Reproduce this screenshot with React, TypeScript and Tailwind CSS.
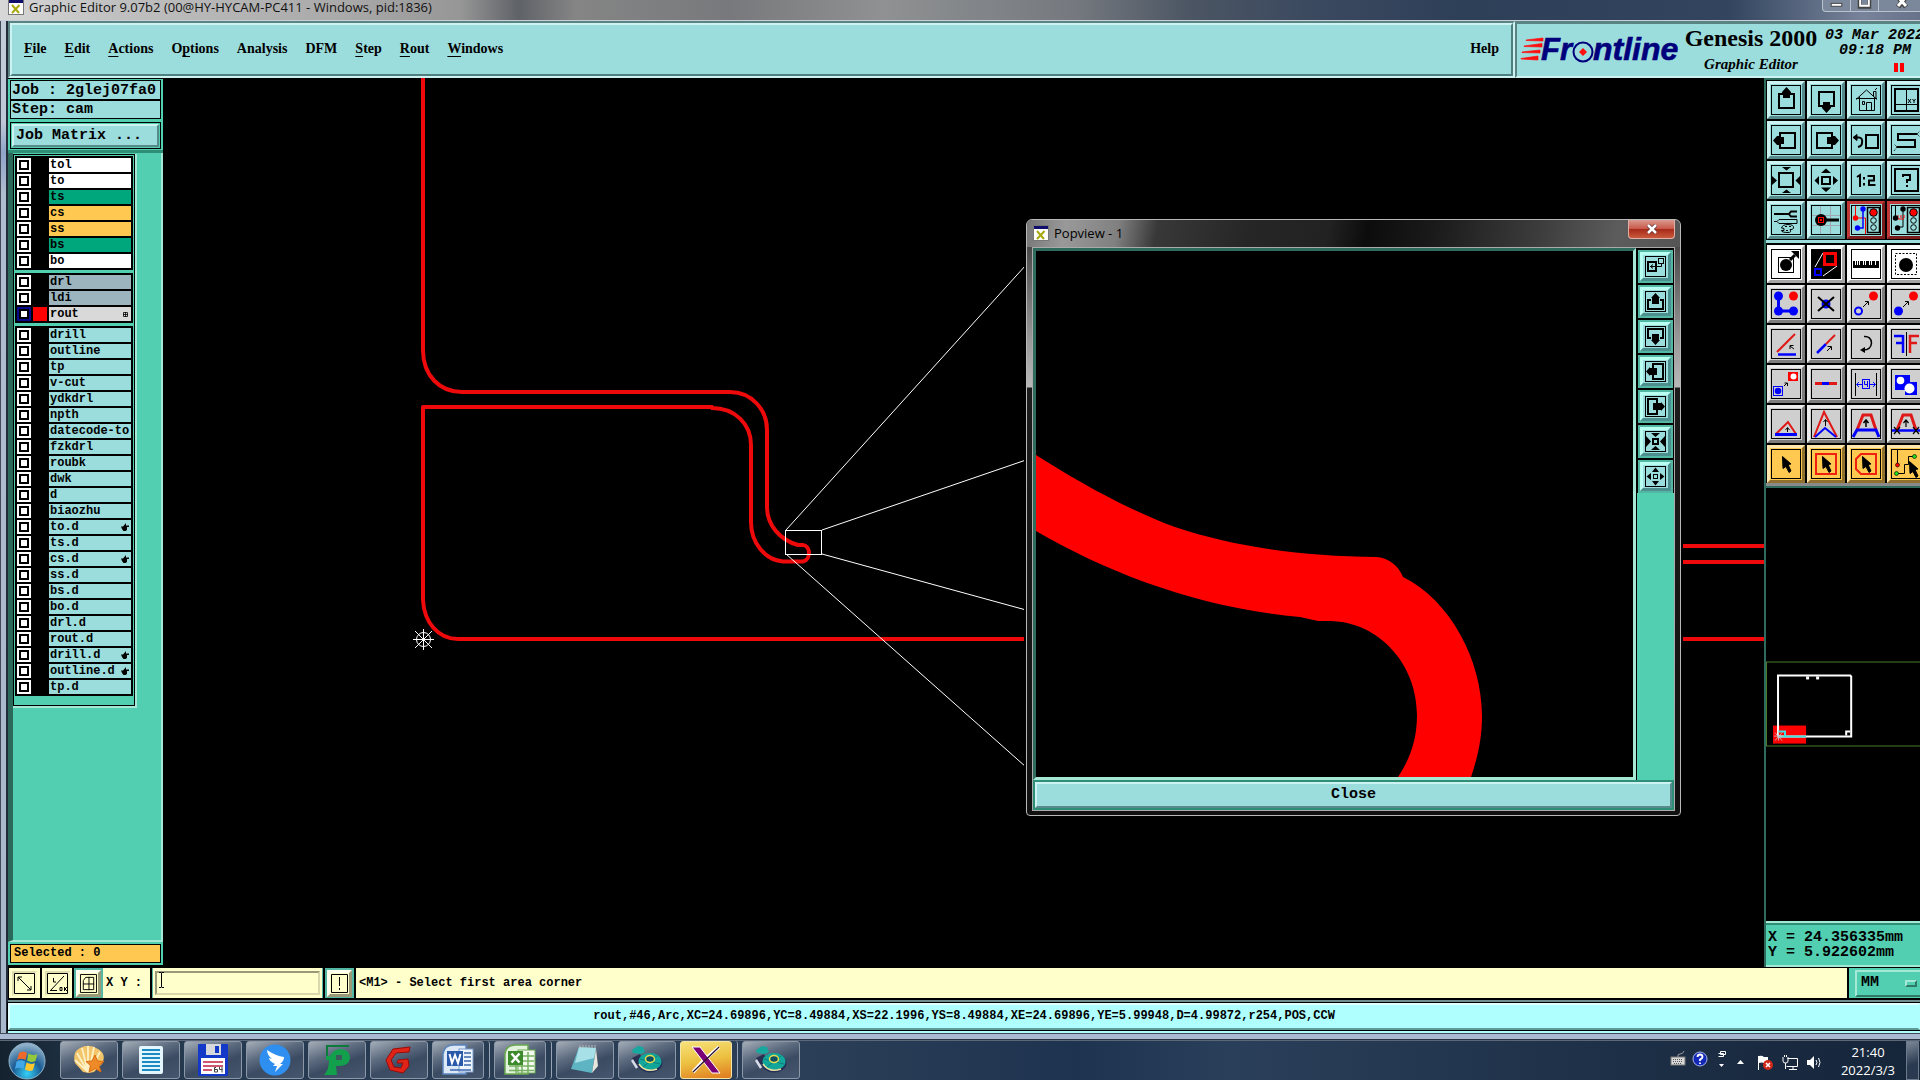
import React from 'react';

type Tone = 'teal' | 'white' | 'gray' | 'red' | 'amber';

const toneClass: Record<Tone, string> = {
  teal: 'bg-[#9bdcdc] border-t-[#cdf2f2] border-l-[#cdf2f2] border-b-[#578a8a] border-r-[#578a8a]',
  white: 'bg-white border-t-[#fafafa] border-l-[#fafafa] border-b-[#a4a4a4] border-r-[#a4a4a4]',
  gray: 'bg-[#cfcfcf] border-t-[#ebebeb] border-l-[#ebebeb] border-b-[#7c7c7c] border-r-[#7c7c7c]',
  red: 'bg-[#9bdcdc] border-t-[#c03838] border-l-[#c03838] border-b-[#7a1c1c] border-r-[#7a1c1c]',
  amber: 'bg-[#ffc850] border-t-[#ffe6ac] border-l-[#ffe6ac] border-b-[#8f702e] border-r-[#8f702e]',
};

const R = '#ff0000';
const B = '#0000ff';
const RD = '#e01818';

const Cursor = ({ x = 10, y = 6 }: { x?: number; y?: number }) => (
  <path transform={`translate(${x} ${y})`} d="M0.5 0.500L9 8L6 8.500L9 15L7 16.500L4 10.500L1 12.500Z" fill="#000" stroke="#000" />
);

const Lights = () => (
  <g>
    <rect x="16.500" y="2.500" width="12" height="25" fill="#9bdcdc" stroke="#000" strokeWidth="1.500" />
    <circle cx="22.500" cy="7.500" r="3.800" fill={R} stroke="#000" />
    <circle cx="22.500" cy="15.500" r="2.800" fill="none" stroke="#000" />
    <circle cx="22.500" cy="22.500" r="2.800" fill="none" stroke="#000" />
  </g>
);

type Tool = { name: string; tone: Tone; art: React.ReactNode };

const toolsTop: Tool[] = [
  {
    name: 'Pan up', tone: 'teal',
    art: <g><rect x="8" y="9" width="15" height="14" fill="none" stroke="#000" strokeWidth="2" /><path d="M15.500 2L20 7V9H19V13H12V9H11V7Z" /></g>,
  },
  {
    name: 'Pan down', tone: 'teal',
    art: <g><rect x="8" y="7" width="15" height="14" fill="none" stroke="#000" strokeWidth="2" /><path d="M15.500 28L20 23V21H19V17H12V21H11V23Z" /></g>,
  },
  {
    name: 'Home', tone: 'teal',
    art: (
      <g fill="none" stroke="#000">
        <path d="M5 14.500L15.500 5L26 14.500M8.500 12V25.500H23.500V12M15.500 25V17.500H20.500V25M11.500 16.500h2v3h-2zM22.500 11V6.500H25V13M24 5L26 3" />
        <path d="M5 13.500H26" />
      </g>
    ),
  },
  {
    name: 'Window XY', tone: 'teal',
    art: (
      <g fill="none" stroke="#000">
        <rect x="4" y="4" width="23" height="22" strokeWidth="2" />
        <path d="M15.500 4V26M4 19.500H27" />
        <path d="M17 14L20 18M20 14L17 18M21.500 14L23 16L24.500 14M23 16V18" />
      </g>
    ),
  },
  {
    name: 'Pan left', tone: 'teal',
    art: <g><rect x="9" y="8" width="15" height="15" fill="none" stroke="#000" strokeWidth="2" /><path d="M2 15.500L6 11H8V12H13V19H8V20H6Z" /></g>,
  },
  {
    name: 'Pan right', tone: 'teal',
    art: <g><rect x="6" y="8" width="15" height="15" fill="none" stroke="#000" strokeWidth="2" /><path d="M28 15.500L24 11H22V12H16V19H22V20H24Z" /></g>,
  },
  {
    name: 'Previous view', tone: 'teal',
    art: <g fill="none" stroke="#000" strokeWidth="2"><rect x="15" y="10" width="12" height="13" /><path d="M5 12.500H8Q12 13 11 18Q11 21 7 22" /><path d="M2 12.500L6 9.500V15.500Z" fill="#000" strokeWidth="1" /></g>,
  },
  {
    name: 'Serpentine', tone: 'teal',
    art: <g fill="none" stroke="#000"><path d="M26 9H7V15H24V22H6" strokeWidth="2" /><path d="M26 9L29 6M26 9L29 12M6 22L3 19M6 22L3 26" strokeDasharray="1 1" /></g>,
  },
  {
    name: 'Zoom in', tone: 'teal',
    art: <g><rect x="8" y="8" width="14" height="14" fill="none" stroke="#000" strokeWidth="2" /><path d="M11 2H20L15.500 5.500ZM11 28H20L15.500 24.500ZM1 11V20L6 15.500ZM29 11V20L24.500 15.500Z" /></g>,
  },
  {
    name: 'Zoom out', tone: 'teal',
    art: <g><rect x="11" y="12" width="8" height="7" fill="none" stroke="#000" strokeWidth="2" /><path d="M10 8H20L15 3.500ZM10 22.500H20L15 27ZM8 11V20L3.500 15.500ZM22 11V20L27 15.500Z" /></g>,
  },
  {
    name: 'Zoom ratio', tone: 'teal',
    art: <g fill="none" stroke="#000" strokeWidth="2"><path d="M6 12L9 10V22M13 12V14.500M13 18V20.500M16.500 11H23V15.500H18V20H24.500" /></g>,
  },
  {
    name: 'Help', tone: 'teal',
    art: <g fill="none" stroke="#000" strokeWidth="2"><rect x="4" y="4" width="23" height="22" /><path d="M12 12V10H19V15H16V18M16 20V22" /></g>,
  },
  {
    name: 'Setup', tone: 'teal',
    art: (
      <g fill="none" stroke="#000">
        <path d="M3 9H18" strokeWidth="2" /><path d="M26 6.500H20L18 9L20 11.500H26" strokeWidth="2" />
        <path d="M3 16.500H6L8 14.500H26V18.500H8L6 16.500" />
        <path d="M10.500 23Q11.500 19.500 17 19.500Q23 19.500 22.500 23Q22 25 19 24.500Q21 27.500 17 27.500Q10.500 27.500 10.500 25.500H13V23.500Z" />
        <path d="M14 21.500h2M18 21.500h2M15 25.500h2" />
      </g>
    ),
  },
  {
    name: 'Grid snap', tone: 'teal',
    art: (
      <g fill="none">
        <path d="M9.500 1V29M19.500 1V29M1 10.500H29M1 20.500H29" stroke="#9fa8b0" />
        <path d="M15 15H28" stroke="#000" strokeWidth="3" />
        <circle cx="10" cy="15" r="6" fill="#000" />
        <rect x="7.500" y="12.500" width="5" height="5" stroke={R} /><rect x="9.500" y="14.500" width="1" height="1" stroke={R} />
      </g>
    ),
  },
  {
    name: 'Net display', tone: 'red',
    art: (
      <g>
        <path d="M4.500 1V13H14.500V29" fill="none" stroke={R} /><path d="M12 5V23H7" fill="none" stroke={B} strokeWidth="1.500" />
        <circle cx="12" cy="4" r="2.700" fill={B} /><circle cx="4.500" cy="13" r="2.700" fill={R} /><circle cx="6.500" cy="23" r="2.700" fill={B} />
        <Lights />
      </g>
    ),
  },
  {
    name: 'Net clear', tone: 'red',
    art: (
      <g>
        <path d="M4.500 1V13M12 4V22H6" fill="none" stroke="#000" /><path d="M7 10V14H13M10 10V13M13 10V13" stroke={R} fill="none" />
        <circle cx="12" cy="4" r="2.700" /><circle cx="4.500" cy="13" r="2.700" /><circle cx="6.500" cy="23" r="2.700" />
        <Lights />
      </g>
    ),
  },
];

const toolsBottom: Tool[] = [
  {
    name: 'Feature popup', tone: 'white',
    art: <g><rect x="7.500" y="8.500" width="15" height="15" fill="none" stroke="#000" /><circle cx="15" cy="16" r="6" /><path d="M19 11L24 6" stroke="#000" strokeWidth="3" /><path d="M20 2H28V10Z" /></g>,
  },
  {
    name: 'Popview', tone: 'white',
    art: (
      <g>
        <rect x="1" y="1" width="28" height="28" />
        <path d="M4 18L12 4M12 27L26 17" stroke="#fff" />
        <rect x="13.500" y="4.500" width="11" height="11" fill="none" stroke={R} strokeWidth="3" />
        <rect x="4" y="20" width="6" height="6" fill="none" stroke={B} strokeWidth="2" />
      </g>
    ),
  },
  {
    name: 'Measure', tone: 'white',
    art: (
      <g>
        <rect x="2" y="12" width="26" height="7" />
        <path d="M4.500 12V16M6.500 12V16M8.500 12V16M12.500 12V16M14.500 12V16M18.500 12V16M20.500 12V16M24.500 12V16" stroke="#fff" />
      </g>
    ),
  },
  {
    name: 'Select area', tone: 'white',
    art: <g><rect x="4.500" y="4.500" width="21" height="21" fill="none" stroke="#000" strokeDasharray="2 1.500" /><circle cx="15" cy="16" r="7" /></g>,
  },
  {
    name: 'Select net', tone: 'gray',
    art: <g fill={B}><path d="M7.500 7V22H22" fill="none" stroke={B} strokeWidth="3" /><circle cx="7.500" cy="7" r="4.500" /><circle cx="7.500" cy="22" r="4.500" /><circle cx="22.500" cy="22" r="4.500" /><circle cx="22.500" cy="7" r="4.500" fill={R} /></g>,
  },
  {
    name: 'Delete', tone: 'gray',
    art: <g><circle cx="15" cy="15" r="4.500" fill={B} /><path d="M7 8L23 22M23 8L7 22" stroke="#000" strokeWidth="2" /></g>,
  },
  {
    name: 'Move', tone: 'gray',
    art: <g><circle cx="22.500" cy="7" r="4.500" fill={R} /><circle cx="7.500" cy="22" r="3.500" fill="none" stroke={B} strokeWidth="2" /><path d="M12 18L17 13M14 12.500H17.500V16" stroke="#000" fill="none" /></g>,
  },
  {
    name: 'Copy', tone: 'gray',
    art: <g><circle cx="22.500" cy="7" r="4.500" fill={R} /><circle cx="7.500" cy="22" r="4.500" fill={B} /><path d="M12 18L17 13M14 12.500H17.500V16" stroke="#000" fill="none" /></g>,
  },
  {
    name: 'Rotate line', tone: 'gray',
    art: <g fill="none"><path d="M6 23L24 5" stroke={RD} strokeWidth="2" /><path d="M7 25.500H25" stroke={B} strokeWidth="2.500" /><path d="M19 17L23 20M19 20V16.500H22.500" stroke="#000" /></g>,
  },
  {
    name: 'Extend line', tone: 'gray',
    art: <g fill="none"><path d="M6 24L15 15" stroke={B} strokeWidth="2.500" /><path d="M15 15L24 6" stroke={RD} strokeWidth="2" /><path d="M16 22L20 18M16.500 17.500H20.500V21" stroke="#000" /></g>,
  },
  {
    name: 'Rotate', tone: 'gray',
    art: <g fill="none"><path d="M13 7.500Q20 7 20.500 14Q20 21 12 21" stroke="#000" strokeWidth="1.500" /><path d="M9 21L14 18V24Z" fill="#000" /></g>,
  },
  {
    name: 'Mirror', tone: 'gray',
    art: <g fill="none"><path d="M15.500 3V27" stroke="#000" /><path d="M3 7H12M12 6V24M5 14H12" stroke={B} strokeWidth="2.500" /><path d="M19 6V24M18 7H28M18 14H26" stroke={RD} strokeWidth="2.500" /></g>,
  },
  {
    name: 'Resize', tone: 'gray',
    art: (
      <g fill="none">
        <rect x="17" y="3" width="10" height="9" fill={R} /><circle cx="22.500" cy="7.500" r="3" fill="#fff" />
        <rect x="2.500" y="17.500" width="9" height="9" stroke={B} /><circle cx="7" cy="22" r="3.300" fill={B} />
        <path d="M13 17L16 14M13.500 14H16.500V17" stroke="#000" />
      </g>
    ),
  },
  {
    name: 'Break line', tone: 'gray',
    art: <g><path d="M4 14.500H26" stroke={RD} strokeWidth="3" /><path d="M11 14.500H18" stroke={B} strokeWidth="3" /></g>,
  },
  {
    name: 'Spacing', tone: 'gray',
    art: (
      <g fill="none">
        <path d="M4.500 4V27M25.500 4V27" stroke="#000" />
        <path d="M6 15.500H11M19 15.500H24M8 13L5.500 15.500L8 18M22 13L24.500 15.500L22 18" stroke={B} />
        <rect x="11.500" y="10.500" width="7" height="9" stroke={B} /><path d="M13.500 12V15.500H17M16.500 12V18" stroke={B} />
      </g>
    ),
  },
  {
    name: 'Merge shapes', tone: 'gray',
    art: <g><path d="M4 6H19V13H26V26H14V21H4Z" fill={B} /><circle cx="9.500" cy="11.500" r="3.800" fill="#fff" /><circle cx="18.500" cy="19.500" r="5" fill="#fff" /></g>,
  },
  {
    name: 'Triangle', tone: 'gray',
    art: <g fill="none"><path d="M5 25L17 13L25 25" stroke={RD} strokeWidth="2" /><path d="M4 25.500H26" stroke={B} strokeWidth="3" /><path d="M16.500 23V19M14.500 21L16.500 18.500L18.500 21" stroke="#000" /></g>,
  },
  {
    name: 'Spike', tone: 'gray',
    art: <g fill="none"><path d="M3 28L13 3L26 28" stroke={RD} strokeWidth="2" /><path d="M4 28L14 19L25 28" stroke={B} strokeWidth="2" /><path d="M14.500 17V11M12.500 13L14.500 10.500L16.500 13" stroke="#000" /></g>,
  },
  {
    name: 'Trapezoid', tone: 'gray',
    art: <g fill="none"><path d="M6 21L12 6H20L25 21" stroke={RD} strokeWidth="3" /><path d="M2 28L6 21H25L28 28" stroke={B} strokeWidth="3" /><path d="M15 18V11M12.500 14L15 11L17.500 14" stroke="#000" strokeWidth="1.500" /></g>,
  },
  {
    name: 'Trapezoid trim', tone: 'gray',
    art: <g fill="none"><path d="M6 21L12 6H20L25 21" stroke={RD} strokeWidth="3" /><path d="M1 21.500H29" stroke={B} strokeWidth="2.500" /><path d="M15 18V11M12.500 14L15 11L17.500 14M3 18L9 25M9 18L3 25M22 18L28 25M28 18L22 25" stroke="#000" strokeWidth="1.200" /></g>,
  },
  { name: 'Pick', tone: 'amber', art: <Cursor x={11} y={7} /> },
  { name: 'Pick rectangle', tone: 'amber', art: <g><rect x="5" y="5" width="20" height="20" fill="none" stroke="#f02010" strokeWidth="2" /><Cursor x={11} y={7} /></g> },
  { name: 'Pick polygon', tone: 'amber', art: <g><path d="M10 5H25V25H10L5 20V10Z" fill="none" stroke="#f02010" strokeWidth="2" /><Cursor x={11} y={7} /></g> },
  {
    name: 'Pick net', tone: 'amber',
    art: (
      <g>
        <path d="M6.500 1V15M6 24.500H13.500V15.500H17.500V7.500H22" fill="none" stroke="#000" />
        <circle cx="6.500" cy="16" r="2" fill={R} stroke="#000" strokeWidth=".6" /><circle cx="5.500" cy="24.500" r="2" fill="#20e020" stroke="#000" strokeWidth=".6" /><circle cx="23.500" cy="7.500" r="2" fill="#20e020" stroke="#000" strokeWidth=".6" />
        <Cursor x={18} y={12} />
      </g>
    ),
  },
];

const ToolButton = ({ tool }: { tool: Tool }) => (
  <button type="button" aria-label={tool.name} className={`size-[38px] flex-none border-[3px] p-px ${toneClass[tool.tone]}`}>
    <svg viewBox="0 0 30 30" className="block size-[30px]">
      <rect x=".5" y=".5" width="29" height="29" fill="none" stroke="#000" />
      {tool.art}
    </svg>
  </button>
);

const popTools: { name: string; art: React.ReactNode }[] = [
  { name: 'Copy view', art: <g fill="none" stroke="#000"><rect x="3" y="6" width="8" height="9" strokeWidth="2" /><rect x="13.500" y="2.500" width="5" height="5" /><path d="M16.500 8V10.500H5M8 8.500L5.500 10.500L8 12.500" /></g> },
  { name: 'Up', art: <g><path d="M6 9H3V18H18V9H15" fill="none" stroke="#000" strokeWidth="2" /><path d="M10.500 2L15 7H14V13H7V7H6Z" /></g> },
  { name: 'Down', art: <g><path d="M6 12H3V3H18V12H15" fill="none" stroke="#000" strokeWidth="2" /><path d="M10.500 19L15 14H14V8H7V14H6Z" /></g> },
  { name: 'Left', art: <g><path d="M8 7V3H18V18H8V14" fill="none" stroke="#000" strokeWidth="2" /><path d="M1 10.500L5 6V7H12V14H5V15Z" /></g> },
  { name: 'Right', art: <g><path d="M12 7V3H3V18H12V14" fill="none" stroke="#000" strokeWidth="2" /><path d="M20 10.500L16 6V7H8V14H16V15Z" /></g> },
  { name: 'Zoom in', art: <g><rect x="8" y="8" width="5" height="5" fill="none" stroke="#000" strokeWidth="2" /><path d="M6 2H15L10.500 6ZM6 19H15L10.500 15ZM1 5V16L6 10.500ZM20 5V16L15 10.500Z" /></g> },
  { name: 'Zoom out', art: <g><rect x="8.500" y="8.500" width="4" height="4" fill="none" stroke="#000" /><path d="M7 6H14L10.500 1.500ZM7 15H14L10.500 19.500ZM6 7V14L1.500 10.500ZM15 7V14L19.500 10.500Z" /></g> },
];

type Layer = { name: string; bg: string; mark?: 'hand' | 'grid'; active?: boolean };
const T = 'bg-[#9bdcdc]';
const groups: Layer[][] = [
  [
    { name: 'tol', bg: 'bg-white' }, { name: 'to', bg: 'bg-white' }, { name: 'ts', bg: 'bg-[#00a67c]' },
    { name: 'cs', bg: 'bg-[#ffc850]' }, { name: 'ss', bg: 'bg-[#ffc850]' }, { name: 'bs', bg: 'bg-[#00a67c]' }, { name: 'bo', bg: 'bg-white' },
  ],
  [
    { name: 'drl', bg: 'bg-[#9bb4be]' }, { name: 'ldi', bg: 'bg-[#9bb4be]' }, { name: 'rout', bg: 'bg-[#d9d9d9]', mark: 'grid', active: true },
  ],
  [
    { name: 'drill', bg: T }, { name: 'outline', bg: T }, { name: 'tp', bg: T }, { name: 'v-cut', bg: T }, { name: 'ydkdrl', bg: T },
    { name: 'npth', bg: T }, { name: 'datecode-to', bg: T }, { name: 'fzkdrl', bg: T }, { name: 'roubk', bg: T }, { name: 'dwk', bg: T },
    { name: 'd', bg: T }, { name: 'biaozhu', bg: T }, { name: 'to.d', bg: T, mark: 'hand' }, { name: 'ts.d', bg: T },
    { name: 'cs.d', bg: T, mark: 'hand' }, { name: 'ss.d', bg: T }, { name: 'bs.d', bg: T }, { name: 'bo.d', bg: T }, { name: 'drl.d', bg: T },
    { name: 'rout.d', bg: T }, { name: 'drill.d', bg: T, mark: 'hand' }, { name: 'outline.d', bg: T, mark: 'hand' }, { name: 'tp.d', bg: T },
  ],
];

const LayerRow = ({ layer }: { layer: Layer }) => (
  <li className="flex h-[14px] gap-[2px]">
    <input
      id={`layer-${layer.name}`}
      type="checkbox"
      className={`size-[14px] flex-none appearance-none border-2 bg-white shadow-[inset_0_0_0_2px_#000] ${layer.active ? 'border-[#0a0a90]' : 'border-white'}`}
    />
    <span className={`w-[14px] flex-none ${layer.active ? 'bg-[#ff0000]' : 'bg-black'}`} />
    <label htmlFor={`layer-${layer.name}`} className={`flex min-w-0 flex-1 items-center justify-between pl-px pr-[2px] text-[12px] leading-[14px] whitespace-nowrap ${layer.bg}`}>
      {layer.name}
      {layer.mark === 'hand' && (
        <svg viewBox="0 0 8 8" className="size-[8px] flex-none"><path d="M0 3.500H2L5 0V2.500H8V4H6V7L4.500 8H2.500L1 6Z" /></svg>
      )}
      {layer.mark === 'grid' && (
        <svg viewBox="0 0 5 5" className="mr-px size-[5px] flex-none"><path d="M.5 .5H4.500V4.500H.5ZM2.500 0V5M0 2.500H5" fill="none" stroke="#000" strokeWidth=".8" /></svg>
      )}
    </label>
  </li>
);

const menus: [string, number][] = [
  ['File', 0], ['Edit', 0], ['Actions', 0], ['Options', 1], ['Analysis', -1], ['DFM', -1], ['Step', 0], ['Rout', 0], ['Windows', 0],
];

const MenuItem = ({ label, at }: { label: string; at: number }) => (
  <button type="button" className="leading-5">
    {at < 0 ? label : (
      <>
        {label.slice(0, at)}
        <span className="underline decoration-1 underline-offset-[3px]">{label[at]}</span>
        {label.slice(at + 1)}
      </>
    )}
  </button>
);

const AppIcon = () => (
  <svg viewBox="0 0 16 16" className="size-4 flex-none">
    <rect x=".5" y=".5" width="15" height="15" fill="#fff" stroke="#777" />
    <rect x="1" y="1" width="14" height="3" fill="#10106c" />
    <path d="M4 6L11 14M11.500 6L4 14" stroke="#a8a810" strokeWidth="2" />
  </svg>
);

const TitleBar = () => (
  <header className="flex h-[21px] flex-none items-start border-b border-b-[#c9cfd6] bg-[linear-gradient(90deg,#d8d8d8_0%,#c0c0c0_6%,#a9a9a9_18%,#969696_24%,#5f6267_27%,#858585_30%,#77797c_38%,#8f9192_46%,#75797f_56%,#4b5563_62%,#3c4a60_68%,#2e3f58_76%,#32445e_90%,#77839a_97%,#66738a_100%)]">
    <div className="flex h-[14px] flex-1 items-center gap-[5px] pl-2">
      <AppIcon />
      <h1 className="font-['Open_Sans',sans-serif] text-[13px] leading-[14px] whitespace-nowrap text-[#111]">
        Graphic Editor 9.07b2 (00@HY-HYCAM-PC411 - Windows, pid:1836)
      </h1>
    </div>
    <div className="-mr-1 flex h-3 flex-none rounded-b border border-t-0 border-[#b9c2cf] bg-[#7b879a]">
      <button type="button" aria-label="Minimize" className="w-7 border-r border-[#b9c2cf]"><svg viewBox="0 0 28 12" className="block"><rect x="8.500" y="3.500" width="11" height="3" fill="#fff" stroke="#444" /></svg></button>
      <button type="button" aria-label="Maximize" className="w-7 border-r border-[#b9c2cf]"><svg viewBox="0 0 28 12" className="block"><path d="M9 -2H19V7H9Z" fill="none" stroke="#444" strokeWidth="4" /><path d="M9.500 -2H18.500V6H9.500Z" fill="none" stroke="#fff" strokeWidth="2" /></svg></button>
      <button type="button" aria-label="Close" className="w-11"><svg viewBox="0 0 44 12" className="block"><path d="M19 -3L27 7M27 -3L19 7" stroke="#444" strokeWidth="5" /><path d="M19 -3L27 6M27 -3L19 6" stroke="#fff" strokeWidth="3" /></svg></button>
    </div>
  </header>
);

const FrontlineLogo = () => (
  <svg viewBox="0 0 160 26" className="h-[26px] w-[160px] flex-none overflow-visible">
    <path d="M5 4L22 2V5L5 4.500ZM3 10L21 7.500V11L3 10.500ZM1 16L19 14V17L1 16.500ZM0 22.500L17 20V24L0 23Z" fill="#ff1010" stroke="#ff1010" strokeWidth=".7" />
    <text x="20" y="24" fontFamily="'Liberation Sans', sans-serif" fontWeight="700" fontStyle="italic" fontSize="31" fill="#00007c" stroke="#00007c" strokeWidth=".6">Fr</text>
    <circle cx="62" cy="16" r="9.500" fill="none" stroke="#00007c" strokeWidth="2" />
    <path d="M62 12L66 16L62 20L58 16Z" fill="#ff1010" />
    <text x="72" y="24" fontFamily="'Liberation Sans', sans-serif" fontWeight="700" fontStyle="italic" fontSize="32" fill="#00007c" stroke="#00007c" strokeWidth=".6">ntline</text>
  </svg>
);

const MenuBar = () => (
  <div className="flex h-[57px] flex-none bg-[#9bdcdc]">
    <nav className="flex min-w-0 flex-1 items-center justify-between border-2 border-t-[#5b8383] border-l-[#5b8383] border-b-[#cdf2f2] border-r-[#cdf2f2] font-['Liberation_Serif',serif] text-[14px] font-bold">
      <div className="flex h-full flex-1 items-center justify-between border-2 border-t-[#cdf2f2] border-l-[#cdf2f2] border-b-[#4f7f7f] border-r-[#4f7f7f] px-3 pb-px">
        <div className="flex gap-[18px]">{menus.map(([l, a]) => <MenuItem key={l} label={l} at={a} />)}</div>
        <MenuItem label="Help" at={-1} />
      </div>
    </nav>
    <div className="flex w-[405px] flex-none overflow-hidden border-t-[3px] border-b-2 border-l-2 border-t-[#5b8383] border-l-[#5b8383] border-b-[#cdf2f2] pl-1">
      <div className="flex-none pt-3"><FrontlineLogo /></div>
      <div className="w-[140px] flex-none text-center font-['Liberation_Serif',serif] font-bold whitespace-nowrap">
        <p className="text-[24px] leading-[28px]">Genesis 2000</p>
        <p className="text-[15px] leading-[24px] italic">Graphic Editor</p>
      </div>
      <div className="w-[102px] flex-none pt-1 font-['Liberation_Mono',monospace] text-[15px] leading-[15px] font-bold whitespace-nowrap italic">
        <p className="pl-1">03 Mar 2022</p>
        <p className="pl-[18px]">09:18 PM</p>
        <svg viewBox="0 0 10 9" className="mt-[5px] ml-[73px] h-[9px] w-[10px]"><path d="M0 0H4V9H0ZM6 0H10V9H6Z" fill="#ff0000" /></svg>
      </div>
    </div>
  </div>
);

const Sidebar = () => (
  <aside className="flex w-[155px] flex-none flex-col bg-[#52ceb0] font-['Liberation_Mono',monospace] font-bold">
    <div className="border-t border-t-black border-b-[3px] border-b-[#2f8f76] px-[2px] pt-px pb-px">
      <div className="border border-black bg-[#9bdcdc] text-[15px] leading-[17px] whitespace-nowrap">
        <p className="border-b border-black px-px pt-px">Job : 2glej07fa0</p>
        <p className="border-t border-black px-px">Step: cam</p>
      </div>
      <div className="mt-[3px] border border-black p-px">
        <button type="button" className="block h-[23px] w-full border-2 border-t-[#cdf2f2] border-l-[#cdf2f2] border-b-[#578a8a] border-r-[#578a8a] bg-[#9bdcdc] px-[2px] text-left text-[15px] leading-[19px]">Job Matrix ...</button>
      </div>
    </div>
    <div className="flex-1 border-r-2 border-b-2 border-l-[5px] border-r-[#a6e8d6] border-b-[#a6e8d6] border-l-[#2b6a5b]">
      <div className="mt-px w-[124px] border-r-2 border-b-2 border-[#a6e8d6]">
        <div className="border border-black px-px pt-px pb-[9px]">
          {groups.map((g) => (
            <ul key={g[0].name} className="mb-[3px] flex flex-col gap-[2px] bg-black p-[2px] last:mb-0">
              {g.map((l) => <LayerRow key={l.name} layer={l} />)}
            </ul>
          ))}
        </div>
      </div>
    </div>
    <div className="border-b-2 border-b-black px-[2px] py-[2px]">
      <p className="border border-black bg-[#ffc850] px-[3px] text-[12px] leading-[17px]">Selected : 0</p>
    </div>
  </aside>
);

const BoardDrawing = () => (
  <svg viewBox="163 78 1602 889" preserveAspectRatio="xMinYMin slice" className="block size-full">
    <g fill="none" stroke="#ee0a0a" strokeWidth="4" strokeLinejoin="round">
      <path d="M423 78V350C423 376 440 392 462 392H730C752 392 767 410 767 430V507C767 525 780 540 798 545H803C811 546 811 560 803 561.500H783C765 560 751 543 751 522V445C751 424 735 408 712 408V407H423V600C424 622 438 639 458 639H1765" />
      <path d="M1600 546H1765M1600 562H1765" />
    </g>
    <g fill="none" stroke="#fff">
      <rect x="785.500" y="530.500" width="36" height="24" />
      <path d="M786 530L1026 265M822 530L1026 460M822 554L1026 610M786 554L1026 767" />
      <circle cx="423.500" cy="639.500" r="7" />
      <path d="M423.500 629V650M413 639.500H434M415 631L432 648M432 631L415 648" />
    </g>
  </svg>
);

const Popview = () => (
  <section className="absolute top-[141px] left-[863px] flex h-[597px] w-[655px] flex-col rounded-t-md rounded-b-sm border border-[#b8b8b8] bg-[linear-gradient(180deg,#555_0,#4a4a4a_28px,#999_120px,#b8b8b8_167px,#1c1c1c_168px,#111_100%)] px-[5px] pb-1 shadow-[0_0_0_2px_#000]">
    <div className="-mx-[5px] flex h-[27px] flex-none items-start justify-between rounded-t-md bg-[linear-gradient(100deg,#777_0%,#999_6%,#808080_14%,#383838_20%,#262626_34%,#222_46%,#0c0c0c_52%,#1a1a1a_62%,#3c3c3c_78%,#5c5c5c_90%,#555_100%)] pr-[5px] pl-[6px]">
      <div className="flex items-center gap-[5px] pt-[4px]">
        <AppIcon />
        <h2 className="font-['Open_Sans',sans-serif] text-[13px] leading-[18px] text-black">Popview - 1</h2>
      </div>
      <button type="button" aria-label="Close window" className="flex h-[19px] w-[47px] items-center justify-center rounded-b border border-t-0 border-[#e0b0a8] bg-[linear-gradient(180deg,#d99a8e_0%,#c9594a_48%,#a82a1a_52%,#c95a3c_100%)]">
        <svg viewBox="0 0 12 10" className="h-[10px] w-[12px]"><path d="M2 1L10 9M10 1L2 9" stroke="#5a2a2a" strokeWidth="4" /><path d="M2 1L10 9M10 1L2 9" stroke="#fff" strokeWidth="2.500" /></svg>
      </button>
    </div>
    <div className="flex min-h-0 flex-1 flex-col border border-[#aaa] bg-black">
      <div className="flex min-h-0 flex-1">
        <div className="min-w-0 flex-1 border-[3px] border-t-[#2f6b5d] border-l-[#2f6b5d] border-b-[#a6e8d6] border-r-[#a6e8d6] bg-black">
          <svg viewBox="1036 251 598 526" preserveAspectRatio="xMinYMin slice" className="block size-full">
            <path d="M1036 455C1075 480 1130 511 1175 527C1235 547 1300 556 1377 557C1390 558 1399 567 1403 577C1450 600 1482 660 1482 716C1482 740 1477 760 1470 780H1396C1410 760 1417 740 1417 715C1417 665 1380 622 1330 621H1318L1300 617C1200 608 1110 574 1036 531Z" fill="#ff0000" />
          </svg>
        </div>
        <div className="ml-px flex w-[37px] flex-none flex-col bg-[#52ceb0]">
          <div className="flex flex-col gap-[2px] bg-black px-px pt-[2px]">
            {popTools.map((t) => (
              <button key={t.name} type="button" aria-label={t.name} className="flex h-[33px] w-full items-center justify-center bg-[#52b8a4] p-[2px]">
                <span className="flex size-full items-center justify-center border-[3px] border-t-[#b8fff2] border-l-[#b8fff2] border-b-[#4d8f8f] border-r-[#4d8f8f] bg-[#9bdcdc]">
                  <svg viewBox="0 0 21 21" className="size-[21px] flex-none"><rect x=".5" y=".5" width="20" height="20" fill="none" stroke="#000" />{t.art}</svg>
                </span>
              </button>
            ))}
          </div>
        </div>
      </div>
      <div className="flex-none bg-[#2f8f76] p-[2px]">
        <button type="button" className="block h-[26px] w-full border-2 border-t-[#cdf2f2] border-l-[#cdf2f2] border-b-[#578a8a] border-r-[#578a8a] bg-[#9bdcdc] font-['Liberation_Mono',monospace] text-[15px] leading-[22px] font-bold">Close</button>
      </div>
    </div>
  </section>
);

const Toolbox = () => (
  <aside className="flex w-[156px] flex-none flex-col overflow-hidden border-l-2 border-l-[#2f6b5d] bg-black">
    <div className="border-t-2 border-t-[#2f6b5d] border-b-[3px] border-b-[#9bdcdc] py-px">
      <div className="ml-px grid w-[158px] grid-cols-4 gap-[2px]">{toolsTop.map((t) => <ToolButton key={t.name} tool={t} />)}</div>
    </div>
    <div className="border-b-[3px] border-b-[#8a8a8a] pt-[2px]">
      <div className="ml-px grid w-[158px] grid-cols-4 gap-[2px]">{toolsBottom.map((t) => <ToolButton key={t.name} tool={t} />)}</div>
    </div>
    <div className="min-h-0 flex-1 border-t-2 border-t-[#2f6b5d]">
      <svg viewBox="1766 489 154 432" preserveAspectRatio="xMinYMin slice" className="block size-full">
        <path d="M1925 662.500H1766.500V746.500H1925" fill="none" stroke="#4a7a2a" />
        <rect x="1773" y="726" width="33" height="18" fill="#ff0000" />
        <path d="M1778 737V676H1850L1851 677V737H1778" fill="none" stroke="#fff" strokeWidth="2" />
        <rect x="1806" y="677" width="3" height="3" fill="#fff" /><rect x="1816" y="677" width="3" height="3" fill="#fff" />
        <path d="M1846 736V732H1850" fill="none" stroke="#fff" strokeWidth="2" />
        <path d="M1778 737H1806M1778 732H1785V736" fill="none" stroke="#40e0e0" strokeWidth="2" />
        <path d="M1778.500 731V741M1774 736.500H1783M1775 733L1782 741M1782 733L1775 741" stroke="#c8d0d0" strokeWidth=".8" />
      </svg>
    </div>
    <div className="h-[46px] flex-none border-y-2 border-y-[#a6e8d6] bg-[#52ceb0] pt-[7px] pl-[2px] font-['Liberation_Mono',monospace] text-[15px] leading-[15px] font-bold whitespace-pre shadow-[inset_0_2px_0_#2f8f76]">
      <p>X = 24.356335mm</p>
      <p>Y = 5.922602mm</p>
    </div>
  </aside>
);

const cmdIcon = 'block size-[21px]';
const CommandRow = () => (
  <form className="flex h-[33px] flex-none gap-[2px] border-b-2 border-b-black bg-black pt-px pl-px font-['Liberation_Mono',monospace] text-[12px] font-bold">
    <button type="button" aria-label="Snap diagonal" className="flex w-[31px] items-center justify-center bg-[#ffffcc]">
      <span className="border-2 border-t-[#ddddb0] border-l-[#ddddb0] border-b-[#f6f6c4] border-r-[#f6f6c4]"><svg viewBox="0 0 21 21" className={cmdIcon}><path d="M.5 .5H20.500V20.500H.5ZM4 4L17 17M4 8V4H8M17 13V17H13" fill="none" stroke="#000" /></svg></span>
    </button>
    <button type="button" aria-label="Angle" className="flex w-[30px] items-center justify-center bg-[#ffffcc]">
      <span className="border-2 border-t-[#ddddb0] border-l-[#ddddb0] border-b-[#f6f6c4] border-r-[#f6f6c4]"><svg viewBox="0 0 21 21" className={cmdIcon}><path d="M.5 .5H20.500V20.500H.5ZM3 18L17 3M3 17.500H10M6.500 5V9H9M13 14.500h2v3h-2zM17.500 14V18M20 14L18 16L20 18" fill="none" stroke="#000" /></svg></span>
    </button>
    <button type="button" aria-label="Grid" className="flex w-[29px] items-center justify-center bg-[#52b8a4]">
      <span className="border-[3px] border-t-[#fffff0] border-l-[#fffff0] border-b-[#9a9a78] border-r-[#9a9a78] bg-[#ffffcc] p-px"><svg viewBox="0 0 18 20" className="block h-[19px] w-[17px]"><path d="M.5 .5H17.500V19.500H.5ZM6 3.500H14.500V16.500H3.500V7ZM9.500 3V17M3 10.500H15" fill="none" stroke="#000" /></svg></span>
    </button>
    <div className="-ml-[2px] flex items-center bg-[#ffffcc]">
      <label htmlFor="xy" className="w-[47px] pl-[3px] whitespace-pre">X Y :</label>
    </div>
    <div className="relative w-[171px] flex-none border-x border-x-[#52b8a4] bg-[#ffffcc] px-[2px] py-[3px]">
      <input id="xy" type="text" className="block size-full border-2 border-t-[#9a9a78] border-l-[#9a9a78] border-b-[#d8d8ac] border-r-[#d8d8ac] bg-[#ffffcc] px-1 outline-none" />
      <svg viewBox="0 0 7 16" className="pointer-events-none absolute top-1 left-[5px] h-4 w-[7px]"><path d="M1 .5H3L3.500 1L4 .5H6M3.500 1V15M1 15.500H3L3.500 15L4 15.500H6" fill="none" stroke="#000" /></svg>
    </div>
    <button type="button" aria-label="Alert" className="flex w-[29px] items-center justify-center bg-[#52b8a4]">
      <span className="border-[3px] border-t-[#fffff0] border-l-[#fffff0] border-b-[#9a9a78] border-r-[#9a9a78] bg-[#ffffcc] p-px"><svg viewBox="0 0 17 19" className="block h-[19px] w-[17px]"><path d="M.5 .5H16.500V18.500H.5ZM8.500 3V12M8.500 14V16" fill="none" stroke="#000" /></svg></span>
    </button>
    <output className="flex min-w-0 flex-1 items-center bg-[#ffffcc] pl-[3px]">&lt;M1&gt; - Select first area corner</output>
    <div className="w-[71px] flex-none overflow-hidden bg-[#52ceb0] pt-[2px] pl-[6px]">
      <button type="button" className="flex h-[27px] w-[80px] items-center border-2 border-t-[#a6e8d6] border-l-[#a6e8d6] border-b-[#2f7a66] border-r-[#2f7a66] pl-1 text-[15px]">
        MM
        <span className="ml-[26px] h-[7px] w-3 border-2 border-t-[#a6e8d6] border-l-[#a6e8d6] border-b-[#2f7a66] border-r-[#2f7a66]" />
      </button>
    </div>
  </form>
);

const Disc = () => (
  <g>
    <path d="M1 6L7 2L12 3L14 8L10 10L2 9Z" fill="#18a8a0" />
    <path d="M1 14L9 10L14 22L5 20Z" fill="#2c3050" /><path d="M1 16L6 24" stroke="#d8dce8" strokeWidth="2.500" />
    <ellipse cx="19" cy="19" rx="12.500" ry="9.500" fill="#25305a" /><ellipse cx="19" cy="17.500" rx="11.500" ry="8.500" fill="#12a79a" />
    <path d="M8 20Q14 29 26 25" fill="none" stroke="#e8e4a0" strokeWidth="1.500" /><path d="M9 15L29 20M12 23L26 12" stroke="#0c7c80" />
    <ellipse cx="19" cy="15" rx="4.500" ry="3.500" fill="#0e5060" stroke="#e6dc50" strokeWidth="1.500" />
  </g>
);

type Task = { name: string; art: React.ReactNode; active?: boolean; stacked?: boolean };
const tasks: Task[] = [
  {
    name: 'Shell', art: (
      <g>
        <path d="M16 29L10 28L2 19Q-1 8 7 4Q16 -1 25 5Q34 10 29 20L21 28Z" fill="#f3c56a" />
        <path d="M15 28L4 9M15 28L9 4M15 28L15 2M16 28L21 3M16 28L27 8M15 28L2 16" stroke="#fdf0c4" strokeWidth="1.800" />
        <path d="M22 11L24.500 17L31 17.500L26 21.500L28 28L22 24.500L16 28L17.500 21.500L13 17.500L19 17Z" fill="#ee8a28" stroke="#d86c10" />
      </g>
    ),
  },
  { name: 'Notes', art: <g><rect x="4" y="2" width="24" height="28" rx="2" fill="#e4f6fd" /><path d="M7 6H25M7 10H25M7 14H25M7 18H25M7 22H25M7 26H25" stroke="#1c8cc0" strokeWidth="1.800" /></g> },
  {
    name: 'Save', art: (
      <g>
        <rect x="1" y="0" width="30" height="32" rx="1" fill="#1438c8" /><rect x="9" y="0" width="15" height="11" fill="#d6d8dc" /><rect x="18" y="2" width="4" height="7" fill="#1438c8" />
        <rect x="4" y="14" width="24" height="16" fill="#fff" /><path d="M6 18H26M6 22H26M6 26H15" stroke="#c02040" strokeWidth="1.500" />
        <path d="M19 23.500H17.500V28H20.500V25.500H18M22.500 23V25.500H25.500M25 23V28.500" fill="none" stroke="#444" strokeWidth="1" />
      </g>
    ),
  },
  { name: 'Messenger', art: <g><circle cx="16" cy="16" r="15.500" fill="#2f8ff0" /><path d="M8 6Q17 12 25 13Q25 17 21 20H24L16 28L18 22H14L16 20Q10 17 10 14L13 15Q8 11 8 6Z" fill="#fff" /></g> },
  { name: 'P editor', art: <g><path d="M5 1H28V3H7V12H5Z" fill="#0b7a3a" /><path d="M9 12Q12 5 20 5Q29 6 29 14Q28 22 18 22H15L16 31H3Q8 26 8 16H5V12Z" fill="#12a04c" /><path d="M15 11H21V16H15Z" fill="#3c5a5c" /></g> },
  { name: 'G tools', art: <path d="M27 3L10 5L3 16L7 26L20 29L26 22L25 15L15 16L14 19L20 19L18 24L11 23L8 16L13 9L26 8Z" fill="#e02418" stroke="#9c0c08" /> },
  {
    name: 'Word', stacked: true, art: (
      <g><path d="M1 10Q2 1 12 1H24V30H1Z" fill="#dce8f6" stroke="#5a84bc" strokeWidth="1.500" /><rect x="17" y="5" width="14" height="23" fill="#eef4fb" stroke="#7a9aca" /><path d="M22 9H29M22 13H29M22 17H29M22 21H29M8 26H29" stroke="#3a66ae" strokeWidth="1.500" /><rect x="5" y="7" width="16" height="15" fill="#2a58a8" /><path d="M7.500 10L10 19L13 11L16 19L18.500 10" fill="none" stroke="#fff" strokeWidth="2" /></g>
    ),
  },
  {
    name: 'Excel', stacked: true, art: (
      <g><path d="M1 10Q2 1 12 1H24V30H1Z" fill="#e2f2dc" stroke="#6aa850" strokeWidth="1.500" /><rect x="14" y="6" width="17" height="23" fill="#f2faee" stroke="#6aa850" /><path d="M18 12H30M18 17H30M5 22H30M12 17V29M18 20V29M24 8V29M5 26.500H30" stroke="#74b060" strokeWidth="1.500" /><rect x="4" y="7" width="15" height="14" fill="#3c8a2c" /><path d="M7.500 9.500L15.500 18.500M15.500 9.500L7.500 18.500" stroke="#fff" strokeWidth="2.500" /></g>
    ),
  },
  { name: 'Notepad', art: <g><path d="M10 3L27 4L23 29L2 25Z" fill="#5fb4c4" /><path d="M10 3L27 4L25 14L6 19Z" fill="#a8e0e8" /><path d="M27 5L29 22L23 29Z" fill="#e8e6dc" /><path d="M11 1V4M14 1V4M17 1V4M20 1V4M23 1V4M26 1V4" stroke="#b8b8b8" /></g> },
  { name: 'Disc A', art: <Disc /> },
  { name: 'Genesis', active: true, stacked: true, art: <g><path d="M3 28L13 17L29 3" stroke="#fff" strokeWidth="3.500" /><path d="M2 3H10L30 29H22Z" fill="#7a0078" stroke="#fff" /><path d="M29 3L3 28" stroke="#2a1030" strokeWidth="1.200" /></g> },
  { name: 'Disc B', art: <Disc /> },
];

const Taskbar = () => (
  <footer className="flex h-[40px] flex-none items-stretch border-t border-t-[#5c6878] bg-[linear-gradient(90deg,#14222f_0%,#24384e_6%,#2b3f58_42%,#1e334f_56%,#2a3f5a_64%,#1d2f46_85%,#15253a_100%)]">
    <button type="button" aria-label="Start" className="flex w-[60px] flex-none items-center pl-2">
      <svg viewBox="0 0 38 38" className="size-[38px]">
        <defs><radialGradient id="orb" cx=".5" cy=".85" r=".8"><stop offset="0" stopColor="#35d0f8" /><stop offset=".5" stopColor="#1a5c94" /><stop offset="1" stopColor="#8fb0c8" /></radialGradient></defs>
        <circle cx="19" cy="19" r="18" fill="url(#orb)" stroke="#8fb4cc" />
        <path d="M11 11Q15 8 19 11L17.500 18Q13 15.500 9 18Z" fill="#ee6a2c" /><path d="M20.500 11.500Q25 14 29.500 12L27.500 19Q23 21 19 18.500Z" fill="#94c83c" />
        <path d="M8.500 19.500Q13 17 17 19.500L15.500 27Q11 24.500 7 27Z" fill="#44a8e8" /><path d="M18.500 20.500Q23 23 27 21L25 28Q21 30 17 27.500Z" fill="#fcc62c" />
      </svg>
    </button>
    <div className="flex flex-1 gap-1">
      {tasks.map((t) => (
        <button
          key={t.name}
          type="button"
          aria-label={t.name}
          className={`flex h-[38px] w-[58px] flex-none rounded-[3px] ${t.stacked ? 'border-r border-[#9aa4b2] pr-[5px]' : ''}`}
        >
          <span className={`flex h-full flex-1 items-center justify-center rounded-[3px] border ${t.active ? 'border-[#f4e6a8] bg-[linear-gradient(170deg,#f6e27a_0%,#ecc040_50%,#e07a20_100%)]' : 'border-[#8c98a8] bg-[linear-gradient(160deg,#a4adb8_0%,#5e6c80_35%,#3b4b62_60%,#46566e_100%)]'}`}>
            <svg viewBox="0 0 32 32" className="size-8">{t.art}</svg>
          </span>
        </button>
      ))}
    </div>
    <div className="flex flex-none items-center">
      <svg viewBox="0 0 152 32" className="h-8 w-[152px]" fill="none">
        <rect x="1" y="12" width="14" height="8" fill="#d8d8d8" stroke="#777" /><path d="M3 14.500H13M3 16.500H13M4 18.500H12" stroke="#555" strokeDasharray="1 1" /><path d="M8 12Q7 9 10 9Q13 9 14 6" stroke="#999" />
        <circle cx="30" cy="14" r="7" fill="#1428b8" stroke="#a8b4e8" /><path d="M27.500 12Q27.500 9.500 30 9.500Q32.500 9.500 32.500 12Q32.500 13.500 30 14.500V16M30 17.500V19" stroke="#fff" strokeWidth="1.800" />
        <path d="M50.500 6.500H55.500V9.500H50.500ZM48.500 8.500H53.500V11.500H48.500" stroke="#fff" /><path d="M49 19H54L51.500 22Z" fill="#fff" />
        <path d="M67 19L70.500 15L74 19Z" fill="#fff" />
        <path d="M88.500 11V25" stroke="#fff" /><path d="M89 11Q92 10 94 12H98V18H94Q92 17 89 18Z" fill="#fff" /><circle cx="98" cy="20" r="5" fill="#d02818" /><path d="M96 18L100 22M100 18L96 22" stroke="#fff" strokeWidth="1.500" />
        <path d="M117.500 13.500H127.500V21.500H116.500M119 24.500H127M123 22V24M113 12V16Q113 18 115.500 18Q118 18 118 16V12M115.500 18V24M114.500 10V12M116.500 10V12" stroke="#fff" />
        <path d="M137 15H140L144 11V24L140 20H137Z" fill="#fff" /><path d="M146 15Q148 17.500 146 20M148.500 13Q151.500 17.500 148.500 22" stroke="#fff" />
      </svg>
      <time className="mr-1 ml-3 w-[68px] text-center font-['Open_Sans',sans-serif] text-[13px] leading-[18px] text-white">
        21:40<br />2022/3/3
      </time>
      <button type="button" aria-label="Show desktop" className="mr-px h-full w-[13px] border border-[#6c7a8c] bg-[linear-gradient(160deg,#7c8898,#2a3a50_60%)]" />
    </div>
  </footer>
);

export default function App() {
  return (
    <div className="flex h-screen w-full flex-col overflow-hidden bg-black text-black">
      <TitleBar />
      <div className="flex min-h-0 flex-1">
        <div className="w-2 flex-none border-r-2 border-l border-r-[#222c38] border-l-[#404a58] bg-[linear-gradient(180deg,#c4ccd8_0%,#c0c8d8_10%,#8fa4c8_13%,#b0bccf_17%,#aab8cc_100%)]" />
        <div className="flex min-w-0 flex-1 flex-col">
          <MenuBar />
          <div className="flex min-h-0 flex-1">
            <Sidebar />
            <main className="relative min-w-0 flex-1 bg-black">
              <BoardDrawing />
              <Popview />
            </main>
            <Toolbox />
          </div>
          <CommandRow />
          <div className="flex h-[33px] flex-none flex-col border-t-[3px] border-t-[#6f8f8f] bg-[#b0ffff] pb-[3px]">
            <p className="flex-1 border-2 border-t-[#e0ffff] border-l-[#e0ffff] border-b-[#5f9c9c] border-r-[#b0ffff] text-center font-['Liberation_Mono',monospace] text-[12px] leading-[23px] font-bold shadow-[0_0_0_1px_#000]">
              rout,#46,Arc,XC=24.69896,YC=8.49884,XS=22.1996,YS=8.49884,XE=24.69896,YE=5.99948,D=4.99872,r254,POS,CCW
            </p>
          </div>
        </div>
      </div>
      <div className="h-[7px] flex-none border-t border-b border-t-[#404a58] border-b-[#2a3442] bg-[#a9bad2]" />
      <Taskbar />
    </div>
  );
}
